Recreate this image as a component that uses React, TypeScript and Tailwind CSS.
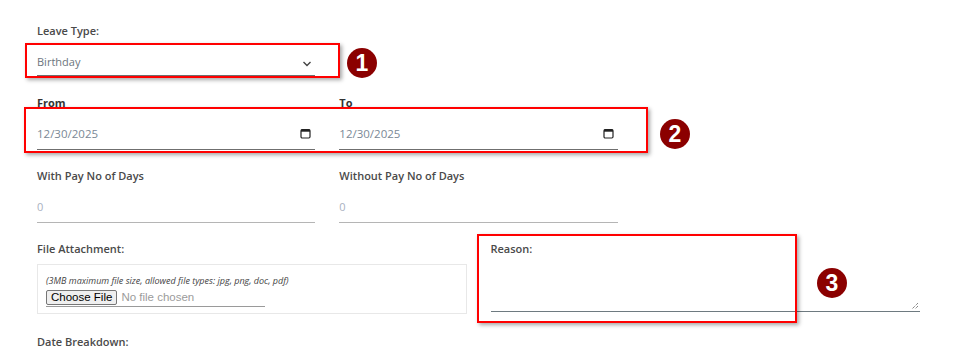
import React from "react";

const font = { fontFamily: '"Open Sans", "Liberation Sans", sans-serif' };

function Chevron() {
  return (
    <svg width="10" height="6" viewBox="0 0 10 6" className="mr-[3px] mb-[3px]">
      <path d="M1.5 1 L5 4.5 L8.5 1" fill="none" stroke="#444" strokeWidth="1.4" />
    </svg>
  );
}

function Calendar() {
  return (
    <svg width="11" height="11" viewBox="0 0 11 11" className="mr-[4px] mb-[3px]">
      <rect x="1" y="1.5" width="9" height="8.5" rx="1.2" fill="none" stroke="#222" strokeWidth="1.2" />
      <rect x="1" y="1.5" width="9" height="2.2" fill="#222" />
    </svg>
  );
}

function Badge({ n, className }: { n: string; className: string }) {
  return (
    <div
      className={`absolute w-[30px] h-[30px] rounded-full bg-[#8b0000] text-white flex items-center justify-center text-[23px] font-bold leading-none ${className}`}
      style={{ fontFamily: '"Liberation Sans", Arial, sans-serif' }}
    >
      {n}
    </div>
  );
}

function Label({ children, bold }: { children: React.ReactNode; bold?: boolean }) {
  return (
    <div className={`h-[16px] leading-[16px] text-[11px] ${bold ? "font-bold text-[#333]" : "font-semibold text-[#4a4a4a]"}`}>
      {children}
    </div>
  );
}

export default function App() {
  return (
    <div className="relative w-[953px] h-[360px] bg-white overflow-hidden" style={font}>
      <div className="pl-[37px] pt-[23px] w-[920px] flex flex-col">
        {/* Row 1 */}
        <div className="grid grid-cols-3 gap-x-[24px]">
          <div>
            <Label>Leave Type:</Label>
            <div className="h-[37px] flex items-end justify-between pb-[5px] border-b border-[#6f6f6f]">
              <span className="text-[11px] leading-[16px] text-[#6c757d]">Birthday</span>
              <Chevron />
            </div>
          </div>
        </div>
        {/* Row 2 */}
        <div className="grid grid-cols-3 gap-x-[24px] mt-[19px]">
          <div>
            <Label bold>From</Label>
            <div className="h-[39px] flex items-end justify-between pb-[7px] border-b border-[#6f6f6f]">
              <span className="text-[11.5px] leading-[16px] text-[#7a8896]">12/30/2025</span>
              <Calendar />
            </div>
          </div>
          <div>
            <Label bold>To</Label>
            <div className="h-[39px] flex items-end justify-between pb-[7px] border-b border-[#6f6f6f]">
              <span className="text-[11.5px] leading-[16px] text-[#7a8896]">12/30/2025</span>
              <Calendar />
            </div>
          </div>
        </div>
        {/* Row 3 */}
        <div className="grid grid-cols-3 gap-x-[24px] mt-[18px]">
          <div>
            <Label>With Pay No of Days</Label>
            <div className="h-[39px] flex items-end pb-[7px] border-b border-[#b5b5b5]">
              <span className="text-[11px] leading-[16px] text-[#a9b1bf]">0</span>
            </div>
          </div>
          <div>
            <Label>Without Pay No of Days</Label>
            <div className="h-[39px] flex items-end pb-[7px] border-b border-[#b5b5b5]">
              <span className="text-[11px] leading-[16px] text-[#a9b1bf]">0</span>
            </div>
          </div>
        </div>
        {/* Row 4 */}
        <div className="grid grid-cols-2 gap-x-[24px] mt-[18px]">
          <div>
            <Label>File Attachment:</Label>
            <div className="mt-[7px] h-[50px] border border-[#e8e8e8] pl-[8px] pt-[10px]">
              <div className="text-[9px] leading-[12px] italic text-[#444]">
                (3MB maximum file size, allowed file types: jpg, png, doc, pdf)
              </div>
              <div
                className="mt-[3px] w-[219px] flex items-center border-b border-[#9a9a9a] pb-[1px]"
                style={{ fontFamily: '"Liberation Sans", Arial, sans-serif' }}
              >
                <span className="h-[15px] px-[4px] flex items-center bg-[#efefef] border border-[#767676] rounded-[2px] text-[11.5px] text-black leading-none">
                  Choose File
                </span>
                <span className="ml-[4px] text-[11.5px] text-[#9b9b9b] leading-none">No file chosen</span>
              </div>
            </div>
          </div>
          <div>
            <Label>Reason:</Label>
            <div className="h-[55px] border-b border-[#6e7a80] relative">
              <svg width="8" height="8" viewBox="0 0 8 8" className="absolute right-[1px] bottom-[1px]">
                <path d="M7 1 L1 7 M7 4 L4 7" stroke="#555" strokeWidth="1" strokeDasharray="1 1" />
              </svg>
            </div>
          </div>
        </div>
        {/* Row 5 */}
        <div className="mt-[20px]">
          <Label>Date Breakdown:</Label>
        </div>
      </div>

      {/* Annotations */}
      <div className="absolute left-[25px] top-[43px] w-[315px] h-[35px] border-2 border-[#ff0000] shadow-[2px_2px_4px_rgba(0,0,0,0.35)]" />
      <Badge n="1" className="left-[347px] top-[48px]" />
      <div className="absolute left-[24px] top-[107px] w-[624px] h-[46px] border-2 border-[#ff0000] shadow-[2px_2px_4px_rgba(0,0,0,0.35)]" />
      <Badge n="2" className="left-[660px] top-[119px]" />
      <div className="absolute left-[477px] top-[234px] w-[320px] h-[89px] border-2 border-[#ff0000] shadow-[2px_2px_4px_rgba(0,0,0,0.35)]" />
      <Badge n="3" className="left-[817px] top-[268px]" />
    </div>
  );
}
